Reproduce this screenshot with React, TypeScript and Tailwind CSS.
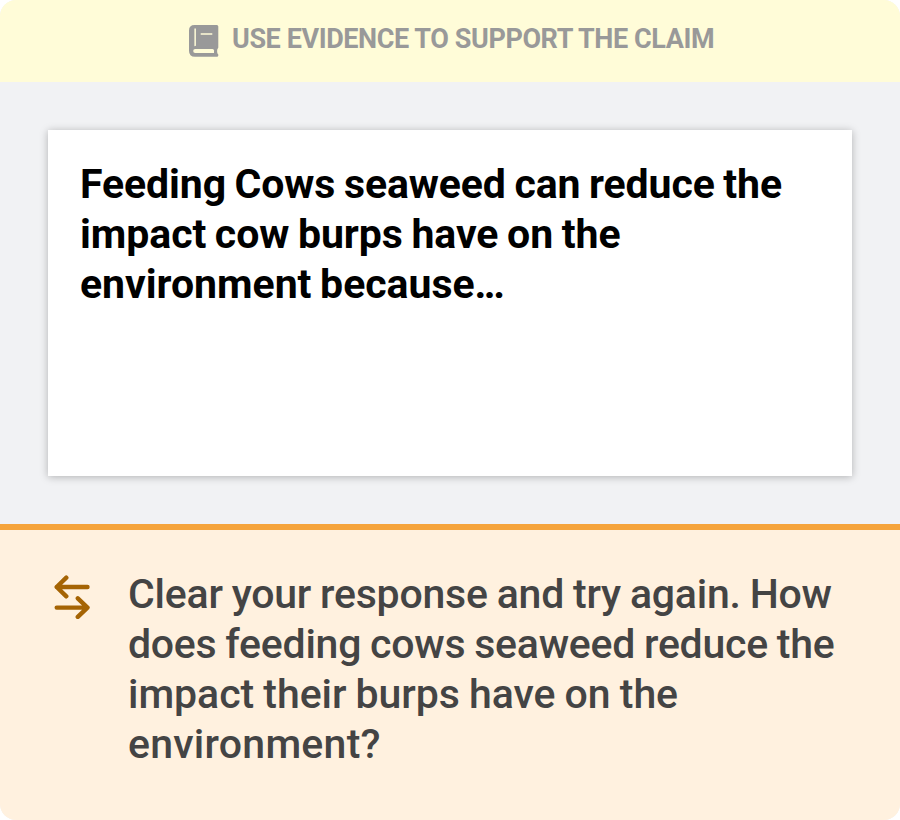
function BookIcon() {
  return (
    <svg width="30" height="32" viewBox="0 0 30 32" className="shrink-0" aria-hidden="true">
      <path
        fill="#999999"
        d="M5.500 0H27.800q1.500 0 1.500 1.500V22.600q0 .9-.9 1.300-.7 2.300 0 4.700.9.500.9 1.300V30.500q0 1.200-1.400 1.200H6Q0 31.700 0 25.700V5.500Q0 0 5.500 0Z"
      />
      <path fill="#fffcd8" d="M6.200 24H23.500Q25 24 25 25.500V28H6.200Q4.200 28 4.200 26T6.200 24Z" />
      <path fill="#fffcd8" d="M5.400 3.500H6.900V20.800L5.400 21.200ZM11.700 8.200H23.300V9.700H11.700Z" />
    </svg>
  );
}

function SwapIcon() {
  return (
    <svg
      width="36"
      height="44"
      viewBox="0 0 36 44"
      fill="none"
      stroke="#a56404"
      strokeWidth="4.4"
      strokeLinecap="round"
      strokeLinejoin="round"
      className="shrink-0"
      aria-hidden="true"
    >
      <path d="M33.500 12H2.700M12.300 2.700L2.700 12L12.300 21.300" />
      <path d="M2.700 32.600H33.500M23.800 23.300L33.500 32.600L23.800 41.900" />
    </svg>
  );
}

export default function App() {
  return (
    <div className="flex h-[820px] w-[900px] flex-col overflow-hidden rounded-2xl bg-[#f1f2f4] font-[Roboto,'Liberation_Sans',sans-serif]">
      <header className="flex h-[82px] shrink-0 items-start bg-[#fffcd8] pt-[25px] pl-[189px]">
        <BookIcon />
        <h2 className="ml-[13px] text-[27px]/[28px] font-bold tracking-[-0.41px] whitespace-nowrap text-[#999999]">
          USE EVIDENCE TO SUPPORT THE CLAIM
        </h2>
      </header>

      <main className="h-[442px] shrink-0 p-12">
        <div className="h-[346px] bg-white pt-[29px] pl-8 text-[41px]/[50px] font-bold whitespace-nowrap text-black shadow-[0_1px_8px_rgba(0,0,0,0.27)]">
          <p className="tracking-[-0.1px] [word-spacing:-1.5px]">Feeding Cows seaweed can reduce the</p>
          <p className="tracking-[-0.06px] [word-spacing:-1.5px]">impact cow burps have on the</p>
          <p className="tracking-[-0.03px] [word-spacing:-1.5px]">
            environment because<span className="tracking-[-2.6px]">...</span>
          </p>
        </div>
      </main>

      <section className="flex flex-1 items-start border-t-6 border-[#f5a43c] bg-[#fff1df] pt-[39px] pl-[54px]">
        <div className="mt-1.5">
          <SwapIcon />
        </div>
        <div className="ml-[38px] text-[41px]/[50px] font-medium whitespace-nowrap text-[#444444]">
          <p className="tracking-[-0.22px] [word-spacing:-1px]">Clear your response and try again. How</p>
          <p className="tracking-[-0.25px] [word-spacing:-1px]">does feeding cows seaweed reduce the</p>
          <p className="tracking-[-0.04px] [word-spacing:-1px]">impact their burps have on the</p>
          <p className="tracking-[0.25px]">environment?</p>
        </div>
      </section>
    </div>
  );
}
